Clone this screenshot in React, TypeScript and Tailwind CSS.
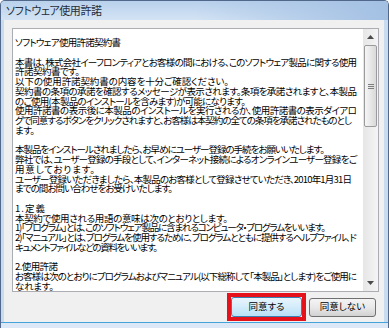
import { useLayoutEffect, useRef, useState } from 'react';

// text starts at x=15 in the window; each row gives the x where its last glyph ends
const TEXT_LEFT = 15;

const rows: ([string, number] | null)[] = [
  ['ソフトウェア使用許諾契約書', 121],
  null,
  ['本書は、株式会社イーフロンティアとお客様の間における、このソフトウェア製品に関する使用', 357],
  ['許諾契約書です。', 80],
  ['以下の使用許諾契約書の内容を十分ご確認ください。', 229],
  ['契約書の条項の承諾を確認するメッセージが表示されます。条項を承諾されますと、本製品', 357],
  ['のご使用(本製品のインストールを含みます)が可能になります。', 246],
  ['使用許諾書の表示後に本製品のインストールを実行されるか、使用許諾書の表示ダイアロ', 357],
  ['グで同意するボタンをクリックされますと、お客様は本契約の全ての条項を承諾されたものとし', 352],
  ['ます。', 35],
  null,
  ['本製品をインストールされましたら、お早めにユーザー登録の手続をお願いいたします。', 325],
  ['弊社では、ユーザー登録の手段として、インターネット接続によるオンラインユーザー登録をご', 357],
  ['用意しております。', 95],
  ['ユーザー登録いただきましたら、本製品のお客様として登録させていただき、2010年1月31日', 352],
  ['までの間お問い合わせをお受けいたします。', 173],
  null,
  ['1.定義', 45],
  ['本契約で使用される用語の意味は次のとおりとします。', 228],
  ['1)「プログラム」とは、このソフトウェア製品に含まれるコンピュータ・プログラムをいいます。', 326],
  ['2)「マニュアル」とは、プログラムを使用するために、プログラムとともに提供するヘルプファイル、ド', 357],
  ['キュメントファイルなどの資料をいいます。', 158],
  null,
  ['2.使用許諾', 58],
  ['お客様は次のとおりにプログラムおよびマニュアル(以下総称して「本製品」とします)をご使用に', 357],
  ['なれます。', 54],
];

// stretches or squeezes a line of text so its glyphs span `width` px
function Fit({ text, width, className }: { text: string; width: number; className?: string }) {
  const ref = useRef<HTMLSpanElement>(null);
  const [spacing, setSpacing] = useState<number>();

  useLayoutEffect(() => {
    const fit = () => {
      const el = ref.current;
      if (!el) return;
      const n = Array.from(text).length;
      const current = parseFloat(getComputedStyle(el).letterSpacing) || 0;
      const natural = el.getBoundingClientRect().width - n * current;
      setSpacing((width - natural) / Math.max(n - 1, 1));
    };
    fit();
    document.fonts?.ready.then(fit);
  }, [text, width]);

  return (
    <span ref={ref} className={className} style={{ letterSpacing: spacing }}>
      {text}
    </span>
  );
}

function Arrow({ down }: { down?: boolean }) {
  return (
    <svg width="7" height="4" viewBox="0 0 7 4" className={down ? 'rotate-180' : ''}>
      <path d="M3.5 0 L7 4 L0 4 Z" fill="#4a4a4a" />
    </svg>
  );
}

export default function App() {
  return (
    <div className="w-[389px] h-[328px] overflow-hidden flex flex-col border-x border-t border-[#52688a] rounded-t-[5px] bg-[#c9dbef] font-['Noto_Sans_CJK_JP',sans-serif] [font-feature-settings:'palt'] text-black">
      {/* Title bar */}
      <div className="h-[19px] shrink-0 bg-gradient-to-b from-[#b9d1ec] to-[#d3e3f4]">
        <div className="h-full flex items-center pl-[5px] bg-gradient-to-r from-transparent via-transparent to-[#a3c0e3]">
          <Fit text="ソフトウェア使用許諾" width={96} className="text-[11px] leading-none text-[#262f3a] whitespace-nowrap" />
        </div>
      </div>

      {/* Client area */}
      <div className="h-[302px] shrink-0 ml-[3px] w-[380px] bg-[#f0f0f0] flex flex-col">
        <div className="mt-[8px] ml-[8px] w-[367px] h-[264px] border border-[#abadb3] bg-white flex">
          <div className="flex-1 overflow-hidden pt-[9px] pl-[2px] text-[9.5px] leading-[9.76px]">
            {rows.map((row, i) =>
              row ? (
                <div key={i} className="h-[9.76px] whitespace-nowrap">
                  <Fit text={row[0]} width={row[1] - TEXT_LEFT} className="inline-block h-[9.76px]" />
                </div>
              ) : (
                <div key={i} className="h-[9.76px]" />
              ),
            )}
          </div>

          {/* Scrollbar */}
          <div className="w-[15px] flex flex-col bg-gradient-to-r from-[#e6e6e6] to-[#f4f4f4]">
            <div className="h-[16px] flex items-center justify-center">
              <Arrow />
            </div>
            <div className="h-[82px] mx-[1px] rounded-[2px] border border-[#9b9b9b] bg-gradient-to-r from-[#f6f6f6] to-[#d9d9d9] flex flex-col items-center justify-center gap-[1px]">
              <div className="w-[6px] h-px bg-[#7d7d7d]" />
              <div className="w-[6px] h-px bg-[#7d7d7d]" />
              <div className="w-[6px] h-px bg-[#7d7d7d]" />
            </div>
            <div className="flex-1" />
            <div className="h-[16px] flex items-center justify-center">
              <Arrow down />
            </div>
          </div>
        </div>

        {/* Buttons */}
        <div className="mt-[1px] h-[28px] flex items-center justify-end gap-[3px] pr-[8px] text-[9.5px]">
          <div className="w-[79px] h-[28px] border-4 border-[#e5121b]">
            <button className="w-[71px] h-[20px] rounded-[3px] border border-[#3c7fb1] bg-gradient-to-b from-[#e8f5fd] via-[#d3ecfb] to-[#b8e0f7] flex items-center justify-center leading-none">
              同意する
            </button>
          </div>
          <button className="w-[67px] h-[19px] rounded-[3px] border border-[#707070] bg-gradient-to-b from-[#f4f4f4] via-[#e8e8e8] to-[#d2d2d2] flex items-center justify-center leading-none">
            同意しない
          </button>
        </div>
      </div>

      {/* Bottom frame */}
      <div className="h-px bg-[#45a3dc]" />
      <div className="flex-1 bg-[#dce8f5]" />
    </div>
  );
}
